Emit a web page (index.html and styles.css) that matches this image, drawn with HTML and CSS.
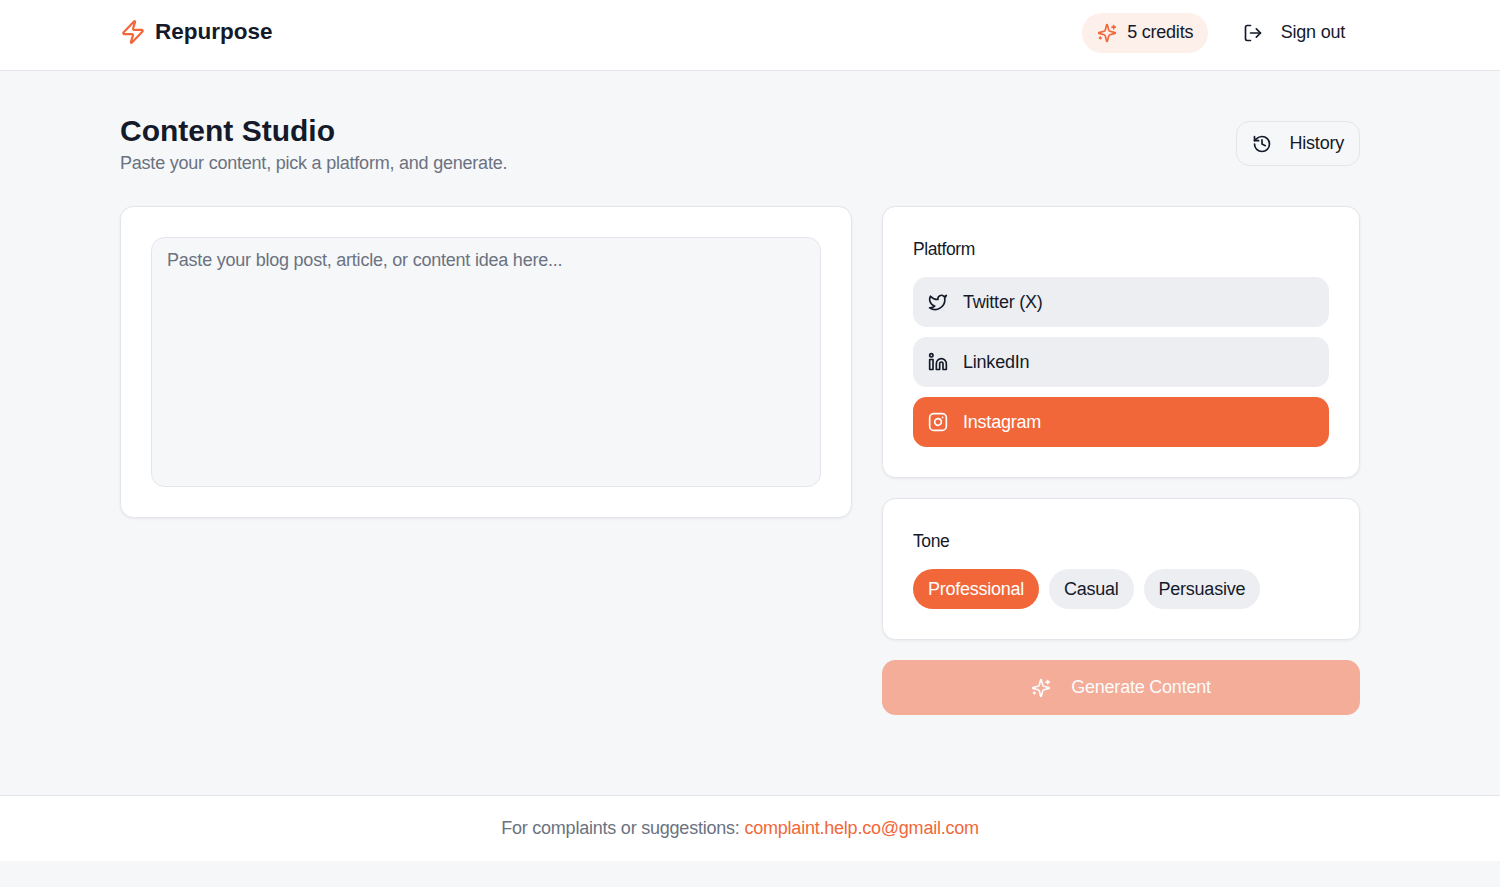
FILE: index.html
```html
<!DOCTYPE html>
<html lang="en">
<head>
    <meta charset="UTF-8">
    <meta name="viewport" content="width=device-width, initial-scale=1.0">
    <title>Repurpose</title>
    <link rel="stylesheet" href="styles.css">
</head>
<body>
    <header class="topbar">
        <div class="logo">
            <svg class="logo-icon" viewBox="0 0 24 24"><path d="M4 14a1 1 0 0 1-.78-1.63l9.9-10.2a.5.5 0 0 1 .86.46l-1.92 6.02A1 1 0 0 0 13 10h7a1 1 0 0 1 .78 1.63l-9.9 10.2a.5.5 0 0 1-.86-.46l1.92-6.02A1 1 0 0 0 11 14z"/></svg>
            <span>Repurpose</span>
        </div>
        <div class="topbar-right">
            <div class="credits">
                <svg class="icon" viewBox="0 0 24 24"><path d="M9.937 15.5A2 2 0 0 0 8.5 14.063l-6.135-1.582a.5.5 0 0 1 0-.962L8.5 9.936A2 2 0 0 0 9.937 8.5l1.582-6.135a.5.5 0 0 1 .963 0L14.063 8.5A2 2 0 0 0 15.5 9.937l6.135 1.581a.5.5 0 0 1 0 .964L15.5 14.063a2 2 0 0 0-1.437 1.437l-1.582 6.135a.5.5 0 0 1-.963 0z"/><path d="M20 3v4"/><path d="M22 5h-4"/><path d="M4 17v2"/><path d="M5 18H3"/></svg>
                <span>5 credits</span>
            </div>
            <button class="signout">
                <svg class="icon" viewBox="0 0 24 24"><path d="M9 21H5a2 2 0 0 1-2-2V5a2 2 0 0 1 2-2h4"/><path d="M16 17l5-5-5-5"/><path d="M21 12H9"/></svg>
                <span>Sign out</span>
            </button>
        </div>
    </header>

    <main class="main">
        <div class="page-head">
            <div>
                <h1>Content Studio</h1>
                <p class="subtitle">Paste your content, pick a platform, and generate.</p>
            </div>
            <button class="history">
                <svg class="icon" viewBox="0 0 24 24"><path d="M3 12a9 9 0 1 0 9-9 9.75 9.75 0 0 0-6.74 2.74L3 8"/><path d="M3 3v5h5"/><path d="M12 7v5l4 2"/></svg>
                <span>History</span>
            </button>
        </div>

        <div class="studio">
            <div class="card editor">
                <textarea placeholder="Paste your blog post, article, or content idea here..."></textarea>
            </div>

            <div class="side">
                <div class="card">
                    <div class="label">Platform</div>
                    <div class="platforms">
                        <button class="platform">
                            <svg class="icon" viewBox="0 0 24 24"><path d="M22 4s-.7 2.1-2 3.4c1.6 10-9.4 17.3-18 11.6 2.2.1 4.4-.6 6-2C3 15.5.5 9.6 3 5c2.2 2.6 5.6 4.1 9 4-.9-4.2 4-6.6 7-3.8 1.1 0 3-1.2 3-1.2z"/></svg>
                            <span>Twitter (X)</span>
                        </button>
                        <button class="platform">
                            <svg class="icon" viewBox="0 0 24 24"><path d="M16 8a6 6 0 0 1 6 6v7h-4v-7a2 2 0 0 0-2-2 2 2 0 0 0-2 2v7h-4v-7a6 6 0 0 1 6-6z"/><rect x="2" y="9" width="4" height="12"/><circle cx="4" cy="4" r="2"/></svg>
                            <span>LinkedIn</span>
                        </button>
                        <button class="platform active">
                            <svg class="icon" viewBox="0 0 24 24"><rect x="2" y="2" width="20" height="20" rx="5" ry="5"/><path d="M16 11.37A4 4 0 1 1 12.63 8 4 4 0 0 1 16 11.37z"/><path d="M17.5 6.5h.01"/></svg>
                            <span>Instagram</span>
                        </button>
                    </div>
                </div>

                <div class="card">
                    <div class="label">Tone</div>
                    <div class="tones">
                        <button class="tone active">Professional</button>
                        <button class="tone">Casual</button>
                        <button class="tone">Persuasive</button>
                    </div>
                </div>

                <button class="generate" disabled>
                    <svg class="icon" viewBox="0 0 24 24"><path d="M9.937 15.5A2 2 0 0 0 8.5 14.063l-6.135-1.582a.5.5 0 0 1 0-.962L8.5 9.936A2 2 0 0 0 9.937 8.5l1.582-6.135a.5.5 0 0 1 .963 0L14.063 8.5A2 2 0 0 0 15.5 9.937l6.135 1.581a.5.5 0 0 1 0 .964L15.5 14.063a2 2 0 0 0-1.437 1.437l-1.582 6.135a.5.5 0 0 1-.963 0z"/><path d="M20 3v4"/><path d="M22 5h-4"/><path d="M4 17v2"/><path d="M5 18H3"/></svg>
                    <span>Generate Content</span>
                </button>
            </div>
        </div>
    </main>

    <footer class="footer">
        For complaints or suggestions: <a href="#">complaint.help.co@gmail.com</a>
    </footer>
</body>
</html>
```

FILE: styles.css
```css
* {
    box-sizing: border-box;
}

body {
    margin: 0;
    font-family: "Liberation Sans", Arial, sans-serif;
    font-size: 18px;
    line-height: 27px;
    letter-spacing: -0.22px;
    background-color: #f6f7f9;
    color: #141a29;
}

button {
    font: inherit;
    letter-spacing: inherit;
    color: inherit;
    background: none;
    border: none;
    cursor: pointer;
}

.icon {
    width: 20px;
    height: 20px;
    flex-shrink: 0;
    fill: none;
    stroke: currentColor;
    stroke-width: 2;
    stroke-linecap: round;
    stroke-linejoin: round;
}

.topbar {
    display: flex;
    justify-content: space-between;
    align-items: center;
    height: 71px;
    padding: 0 140px 7px 120px;
    background-color: #ffffff;
    border-bottom: 1px solid #e3e5ea;
}

.logo {
    display: flex;
    align-items: center;
    gap: 9px;
    font-size: 22.5px;
    font-weight: bold;
    letter-spacing: 0;
}

.logo-icon {
    width: 26px;
    height: 26px;
    fill: none;
    stroke: #f1673a;
    stroke-width: 2;
    stroke-linecap: round;
    stroke-linejoin: round;
}

.topbar-right {
    display: flex;
    align-items: center;
    gap: 21px;
    margin-top: 3px;
}

.credits {
    display: flex;
    align-items: center;
    gap: 10px;
    padding: 6px 14.5px 7px 15px;
    border-radius: 999px;
    background-color: #fdefea;
}

.credits .icon {
    color: #f1673a;
}

.signout {
    display: flex;
    align-items: center;
    gap: 18px;
    padding: 6px 15px 7px 14px;
}

.main {
    padding: 42px 140px 80px 120px;
}

.page-head {
    display: flex;
    justify-content: space-between;
    align-items: flex-start;
    margin-bottom: 29px;
}

h1 {
    margin: 0;
    font-size: 30px;
    line-height: 36px;
    font-weight: bold;
    letter-spacing: 0;
}

.subtitle {
    margin: 1px 0 0;
    color: #6b7280;
}

.history {
    display: flex;
    align-items: center;
    gap: 18px;
    margin-top: 8px;
    padding: 8px 15px;
    border: 1px solid #e3e5ea;
    border-radius: 13.5px;
}

.studio {
    display: grid;
    grid-template-columns: 732px 478px;
    gap: 30px;
    align-items: start;
}

.card {
    padding: 30px;
    background-color: #ffffff;
    border: 1px solid #e3e5ea;
    border-radius: 13.5px;
    box-shadow: 0 1px 3px rgba(0, 0, 0, 0.06);
}

.editor textarea {
    display: block;
    width: 100%;
    height: 250px;
    padding: 9px 15px;
    font: inherit;
    letter-spacing: inherit;
    color: inherit;
    background-color: #f6f7f9;
    border: 1px solid #e3e5ea;
    border-radius: 13.5px;
    resize: none;
    outline: none;
}

.editor textarea::placeholder {
    color: #6b7280;
    opacity: 1;
}

.side {
    display: flex;
    flex-direction: column;
    gap: 20px;
}

.label {
    margin-bottom: 16px;
    font-size: 17.5px;
    line-height: 24px;
    letter-spacing: -0.4px;
}

.platforms {
    display: flex;
    flex-direction: column;
    gap: 10px;
}

.platform {
    display: flex;
    align-items: center;
    gap: 15px;
    height: 50px;
    padding: 0 15px;
    background-color: #edeef2;
    border-radius: 13.5px;
    text-align: left;
}

.platform.active {
    background-color: #f1673a;
    color: #ffffff;
}

.tones {
    display: flex;
    gap: 10px;
}

.tone {
    height: 40px;
    padding: 0 15px;
    background-color: #edeef2;
    border-radius: 999px;
    letter-spacing: -0.25px;
}

.tone.active {
    background-color: #f1673a;
    color: #ffffff;
}

.generate {
    display: flex;
    justify-content: center;
    align-items: center;
    gap: 20px;
    height: 55px;
    background-color: #f3ad99;
    color: #fbfbfc;
    border-radius: 13.5px;
    cursor: not-allowed;
}

.footer {
    padding: 19px 140px 19px 120px;
    background-color: #ffffff;
    border-top: 1px solid #e3e5ea;
    color: #6b7280;
    text-align: center;
}

.footer a {
    color: #f1673a;
    text-decoration: none;
}
```
